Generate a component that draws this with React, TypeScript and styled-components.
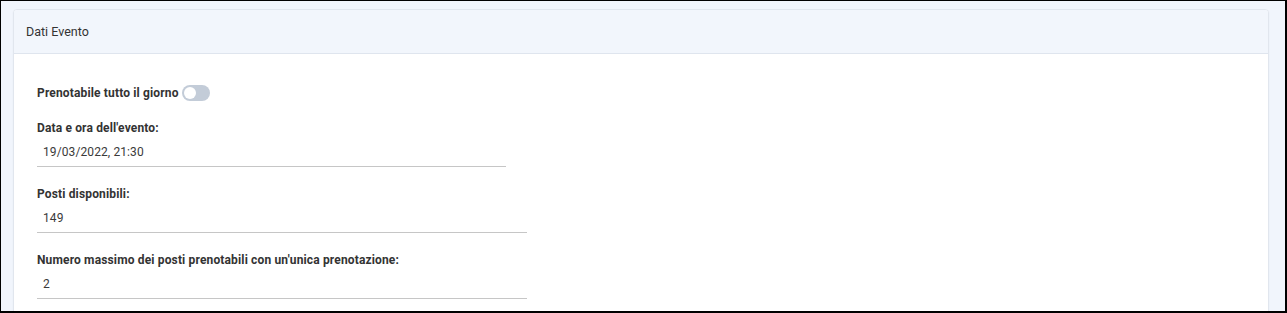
import React from "react";
import styled, { createGlobalStyle } from "styled-components";

const GlobalStyle = createGlobalStyle`
  html, body { margin: 0; padding: 0; }
  body { font-family: Roboto, "Noto Sans", "Liberation Sans", sans-serif; color: #2f3033; }
  * { box-sizing: border-box; }
`;

const Frame = styled.div`
  width: 1287px;
  height: 313px;
  overflow: hidden;
  background: #f1f5fc;
  border: 1px solid #000;
  border-right-width: 2px;
  border-bottom-width: 2px;
  padding: 8px 16px 0 12px;
`;

const Card = styled.section`
  background: #fff;
  border: 1px solid #e1e6ee;
  border-radius: 4px;
  box-shadow: 0 1px 2px rgba(40, 60, 90, 0.06);
  overflow: hidden;
`;

const CardHeader = styled.header`
  height: 44px;
  display: flex;
  align-items: center;
  padding: 0 12px 1px;
  background: #f2f6fc;
  border-bottom: 1px solid #dfe5ee;
  font-size: 12.5px;
  color: #333;
`;

const CardBody = styled.div`
  padding: 31px 23px 40px;
`;

const ToggleRow = styled.label`
  display: flex;
  align-items: center;
  gap: 3px;
  height: 16px;
  margin-bottom: 19px;
  font-size: 12px;
  font-weight: 700;
  letter-spacing: 0.15px;
  color: #333;
`;

const Switch = styled.span<{ $on?: boolean }>`
  position: relative;
  width: 28px;
  height: 16px;
  border-radius: 8px;
  background: ${(p) => (p.$on ? "#0066cc" : "#c3ccd8")};
  &::after {
    content: "";
    position: absolute;
    top: 2px;
    left: ${(p) => (p.$on ? "14px" : "2px")};
    width: 12px;
    height: 12px;
    border-radius: 50%;
    background: #fff;
  }
`;

const Field = styled.div`
  margin-bottom: 19px;
`;

const Label = styled.div`
  height: 16px;
  line-height: 16px;
  font-size: 12px;
  font-weight: 700;
  letter-spacing: 0.15px;
  color: #333;
`;

const Value = styled.div<{ $width: number }>`
  width: ${(p) => p.$width}px;
  height: 31px;
  display: flex;
  align-items: center;
  padding: 1px 6px 0;
  border-bottom: 1px solid #c6c6c6;
  font-size: 12px;
  letter-spacing: 0.1px;
  color: #3a3a3a;
`;

const fields = [
  { label: "Data e ora dell'evento:", value: "19/03/2022, 21:30", width: 469 },
  { label: "Posti disponibili:", value: "149", width: 490 },
  { label: "Numero massimo dei posti prenotabili con un'unica prenotazione:", value: "2", width: 490 },
];

export default function App() {
  return (
    <>
      <GlobalStyle />
      <Frame>
        <Card>
          <CardHeader>Dati Evento</CardHeader>
          <CardBody>
            <ToggleRow>
              Prenotabile tutto il giorno
              <Switch />
            </ToggleRow>
            {fields.map((f) => (
              <Field key={f.label}>
                <Label>{f.label}</Label>
                <Value $width={f.width}>{f.value}</Value>
              </Field>
            ))}
          </CardBody>
        </Card>
      </Frame>
    </>
  );
}
